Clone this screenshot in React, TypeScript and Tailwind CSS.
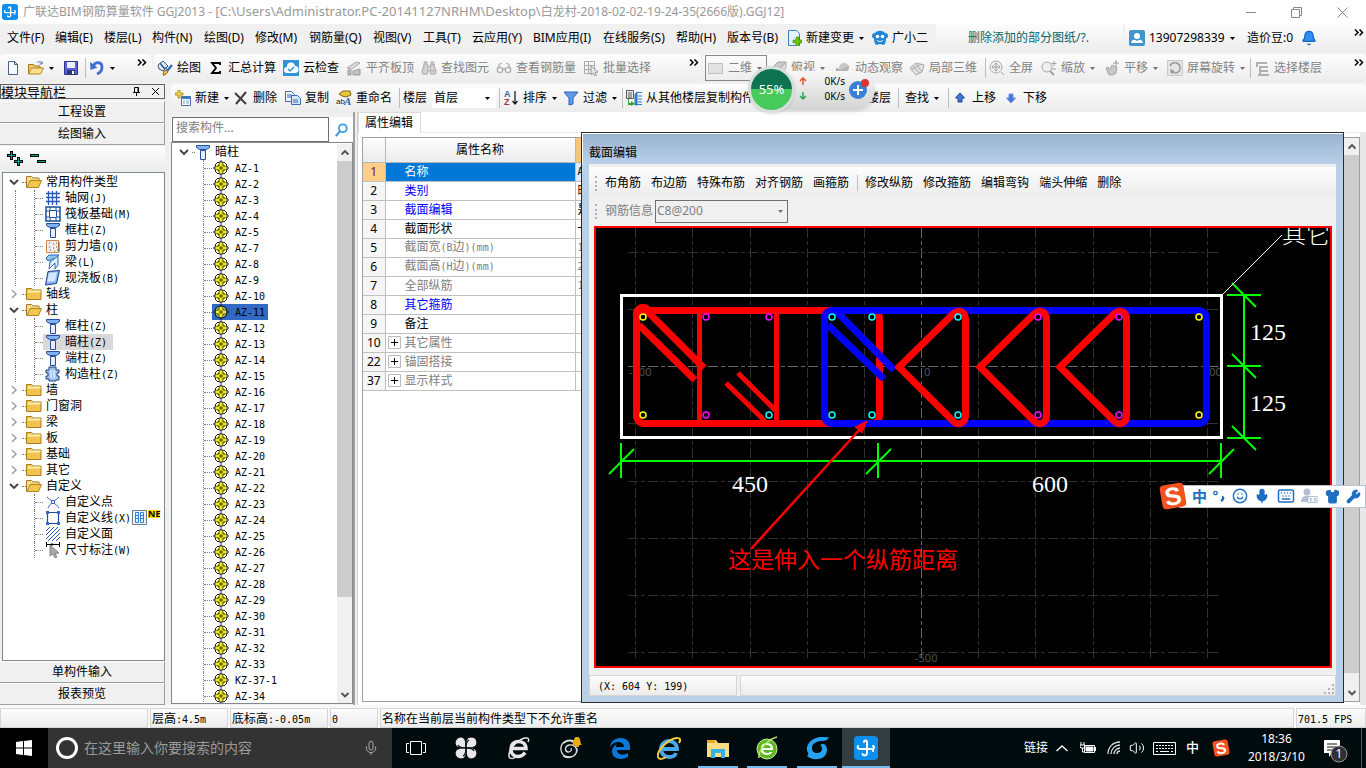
import type { ReactNode } from 'react'
import { Bell, Mic, Keyboard, Shirt, Wrench, Smile, Binoculars, Glasses, Volume2 } from 'lucide-react'
import clsx from 'clsx'

const UI = "font-['Noto_Sans','Noto_Sans_CJK_SC',sans-serif]"
const BAR = 'bg-gradient-to-b from-[#fdfdfd] to-[#ececec]'

// Latin runs sit on a half-width grid next to full-width characters
function Song({ text }: { text: string }) {
  return (
    <>
      {text.split(/([\x20-\x7e]+)/).map((part, i) =>
        i % 2 ? (
          <span key={i} className="whitespace-pre font-['DejaVu_Sans_Mono',monospace] text-[10px]">
            {part}
          </span>
        ) : (
          part
        ),
      )}
    </>
  )
}

function Ico({ children, className }: { children: ReactNode; className?: string }) {
  return (
    <svg viewBox="0 0 16 16" className={clsx('shrink-0', className ?? 'h-4 w-4')} fill="none" aria-hidden="true">
      {children}
    </svg>
  )
}

function Caret({ gray }: { gray?: boolean }) {
  return (
    <svg viewBox="0 0 5 3" className="ml-px h-[3px] w-[5px] shrink-0" aria-hidden="true">
      <path d="M0 0h5L2.5 3z" fill={gray ? '#707070' : '#000'} />
    </svg>
  )
}

function More() {
  return (
    <button aria-label="更多" className="h-6 w-3 shrink-0 pb-3">
      <svg viewBox="0 0 10 7" className="h-[7px] w-[10px]" fill="none" stroke="#000" strokeWidth="1.5">
        <path d="M1 .5 4 3.5 1 6.5M5.500 .5l3 3-3 3" />
      </svg>
    </button>
  )
}

function Sep() {
  return <span className="mx-[3px] h-5 w-px shrink-0 bg-[#bdbdbd]" />
}

type ToolProps = { icon?: ReactNode; label: string; w?: string; off?: boolean; caret?: boolean; hideLabel?: boolean }

function Tool({ icon, label, w, off, caret, hideLabel }: ToolProps) {
  return (
    <button
      aria-label={label}
      className={clsx('flex h-6 shrink-0 items-center gap-1 whitespace-nowrap text-xs', w, off ? 'text-[#838383]' : 'text-black')}
    >
      {icon}
      {!hideLabel && <span>{label}</span>}
      {caret && <Caret gray={off} />}
    </button>
  )
}

function AppLogo({ className }: { className: string }) {
  return (
    <svg viewBox="0 0 24 24" className={className} fill="none" aria-hidden="true">
      <rect width="24" height="24" rx="4" fill="#0d8ff0" />
      <path
        d="M10 6c0-2 3-2 3 0v11c0 3-4 3-4.500 1M4 10c-1 2 0 3 2 3h12c2 0 3-2 1-3M19 13v2"
        stroke="#fff"
        strokeWidth="2"
        strokeLinecap="round"
      />
    </svg>
  )
}

function SogouLogo({ className }: { className: string }) {
  return (
    <svg viewBox="0 0 28 28" className={className} aria-hidden="true">
      <g transform="rotate(-10 14 14)">
        <rect x="2" y="2" width="24" height="24" rx="4" fill="#f4511e" />
        <text x="14" y="23" textAnchor="middle" fontFamily="Liberation Sans, sans-serif" fontWeight="bold" fontSize="25" fill="#fff">S</text>
      </g>
    </svg>
  )
}

/* ---------- toolbar icons ---------- */

const newDoc = (
  <Ico>
    <path d="M3.500 1.500h6l3 3v10h-9z" fill="#f7fbff" stroke="#4a5f88" />
    <path d="M9.500 1.500v3h3" stroke="#4a5f88" />
  </Ico>
)
const openFolder = (
  <Ico>
    <path d="M.5 14V4.500h5l1.500 1.500h5v3" fill="#f2c860" stroke="#a07820" />
    <path d="m.5 14 3-6h12l-3 6z" fill="#ffe08a" stroke="#b08628" />
    <path d="M9 3c1.500-2 4-2 5 1m0 0V1.500M14 4h-2.500" stroke="#4e6fa5" />
  </Ico>
)
const save = (
  <Ico>
    <path d="M1.500 1.500h13v13h-13z" fill="#5a62d8" stroke="#2c3090" />
    <path d="M4 2h8v6H4z" fill="#e8f0ff" />
    <path d="M4 10h8v4.500H4z" fill="#303878" />
    <path d="M9 11h2v3H9z" fill="#fff" />
  </Ico>
)
const undo = (
  <Ico>
    <path d="M4 6c3-5 9-4 9 1 0 3-2 6-5 7" stroke="#3f6fd0" strokeWidth="2.800" />
    <path d="m1 2 .5 8 7-2.500z" fill="#3f6fd0" />
  </Ico>
)
const brush = (
  <Ico>
    <path d="m1 5 5-4 5 5-5 5-4-2z" fill="#dce8f8" stroke="#47566e" />
    <path d="m3 3 4 5c1 1 3 0 2-1" stroke="#2f5b9c" strokeWidth="1.500" />
    <path d="m6 15 1-4 3-1 1 2-3 3z" fill="#f0c040" stroke="#8c6a14" />
    <path d="m10 11 5-6" stroke="#3b6cb5" strokeWidth="2.500" />
  </Ico>
)
const sigma = (
  <Ico>
    <path d="M12 5V3H4l4 5-4 5h8v-2" stroke="#000" strokeWidth="1.800" />
  </Ico>
)
const cloud = (
  <Ico>
    <rect width="16" height="16" fill="#2f93d8" />
    <path d="M4 13a3 3 0 0 1 0-6 4 4 0 0 1 8-1 3 3 0 0 1 0 7z" fill="#fff" />
    <path d="m5 9 2 2 4-4" stroke="#2f93d8" strokeWidth="1.500" />
  </Ico>
)
const plateTop = (
  <Ico>
    <path d="m1 8 9-6 4 1-8 6z" fill="#d9d9d9" stroke="#aaa" />
    <path d="M2 15h3v-5H2zm5 0h7V9l-7 2z" fill="#c2c2c2" stroke="#999" />
  </Ico>
)
const batch = (
  <Ico>
    <path d="M1.500 1.500h10v12h-10zM1.500 5.500h10M1.500 9.500h10M5.500 1.500v12" stroke="#aaa" />
    <path d="m8 6 7 6-3 .5 1.500 3-2 .5-1.500-3L8 15z" fill="#e8e8e8" stroke="#999" />
  </Ico>
)
const box2d = (
  <Ico>
    <path d="M.5 3.500h14v10H.5z" fill="#e2e2e2" stroke="#c0c0c0" />
  </Ico>
)
const topView = (
  <Ico>
    <path d="m1 8 6-6h8l-5 6z" fill="#c9c9c9" stroke="#a0a0a0" />
    <path d="M1 8h9v6H1zM10 8l5-6v6l-5 6z" fill="#e0e0e0" stroke="#b0b0b0" />
  </Ico>
)
const orbit = (
  <Ico>
    <circle cx="9" cy="8" r="5" fill="#c6c6c6" />
    <path d="M1 12c1 4 10 2 13-6M1 12l1-4 3 3z" stroke="#a5a5a5" fill="#b5b5b5" />
  </Ico>
)
const part3d = (
  <Ico>
    <path d="m1 8 6-5 8 2-2 7-6 3z" fill="#e2e2e2" stroke="#aaa" />
    <path d="m4 6 7 8M7 4l6 8M2 10l10-6" stroke="#aaa" />
  </Ico>
)
const fullScreen = (
  <Ico>
    <circle cx="7" cy="7" r="6" fill="#efefef" stroke="#aaa" />
    <path d="M7 3v8M3 7h8M5.500 4.500 7 3l1.500 1.500M5.500 9.500 7 11l1.500-1.500M4.500 5.500 3 7l1.500 1.500M9.500 5.500 11 7 9.500 8.500M12 12l3 3" stroke="#a0a0a0" />
  </Ico>
)
const zoomIcon = (
  <Ico>
    <circle cx="6" cy="7" r="5" fill="#efefef" stroke="#aaa" />
    <path d="m9 11 4 4" stroke="#a0a0a0" strokeWidth="2" />
    <path d="M13 1v5M10.500 3.500h5M11 9h4" stroke="#a0a0a0" />
  </Ico>
)
const pan = (
  <Ico>
    <path d="M2 8 4 7l2 2 2-4 2 1 3 1-1 6-3 2H5z" fill="#c6c6c6" stroke="#a8a8a8" />
    <path d="M12 0v6M9 3h6" stroke="#999" />
  </Ico>
)
const rotate = (
  <Ico>
    <path d="M.5.5h15v15H.5z" fill="#e6e6e6" stroke="#c8c8c8" />
    <path d="M3 6c2-5 11-4 10 3-1 4-5 5-8 3" stroke="#999" strokeWidth="1.500" />
    <path d="m3 9 1 5 4-3z" fill="#999" />
  </Ico>
)
const floors = (
  <Ico>
    <path d="M2 3h11M5 7h9M5 11h9M4 15h11M3 3v4M6 7v8" stroke="#b0b0b0" strokeWidth="2" />
  </Ico>
)
const create = (
  <Ico>
    <path d="M6.500 6.500h9v9h-9z" fill="#fff" stroke="#4a6fa8" />
    <path d="M7 7h8v2H7z" fill="#3b77c8" />
    <path d="M8 11h2m1 0h3m-6 2h2m1 0h3" stroke="#7b9cc8" />
    <path d="M3 0h2v3h3v2H5v3H3V5H0V3h3z" fill="#ffe24a" stroke="#a08000" strokeWidth=".8" />
  </Ico>
)
const cross = (
  <Ico>
    <path d="m2 3 11 11M13 2 3 14" stroke="#404040" strokeWidth="2" />
  </Ico>
)
const copy = (
  <Ico>
    <path d="M.5 1.500h6l3 3v7h-9z" fill="#eaf2ff" stroke="#3f6cb0" />
    <path d="M6.500 5.500h6l3 3v6h-9z" fill="#d5e5ff" stroke="#3f6cb0" />
    <path d="M2 5h5M2 7h4m2 3h5m-5 2h5" stroke="#3f6cb0" />
  </Ico>
)
const rename = (
  <Ico>
    <path d="m3 4 4-3h7l1 4-5 2-4-1z" fill="#e8c53c" stroke="#7c6414" />
    <text x="0" y="14" fontSize="8" fontFamily="Liberation Sans, sans-serif" fill="#222">ab</text>
    <text x="8" y="15" fontSize="11" fontWeight="bold" fontStyle="italic" fontFamily="Liberation Serif, serif" fill="#2b5fb8">A</text>
  </Ico>
)
const sort = (
  <Ico>
    <text x="1" y="7" fontSize="9" fontWeight="bold" fontFamily="Liberation Sans, sans-serif" fill="#3c63a8">A</text>
    <text x="1" y="15" fontSize="9" fontWeight="bold" fontFamily="Liberation Sans, sans-serif" fill="#9b3535">Z</text>
    <path d="M12 1v13m-2.500-3 2.500 3 2.500-3" stroke="#111" strokeWidth="1.200" />
  </Ico>
)
const filter = (
  <Ico>
    <path d="M1 2h14l-5 6v6l-4 1V8z" fill="#5f9be8" stroke="#2f62b5" />
  </Ico>
)
const copyFrom = (
  <Ico>
    <path d="M.5.5h7v8h-7z" fill="#eee" stroke="#555" />
    <path d="M2 3h4M2 5h4M2 7h4" stroke="#555" />
    <path d="M9 4.500 11 2v13H9zM11 2.500h5M12 6h4M12 9h4M12 12h4M11 14.500h5" fill="#2f7bd0" stroke="#2f7bd0" />
    <path d="M3 9v4h2v-2l4 3-4 2v-1H2V9z" fill="#35a035" />
  </Ico>
)
const blueUp = (
  <Ico>
    <path d="m8 3 4.500 5H10v4H6V8H3.500z" fill="#4478dc" stroke="#1c4293" />
  </Ico>
)
const blueDown = (
  <Ico>
    <path d="m8 13 4.500-5H10V4H6v4H3.500z" fill="#4478dc" stroke="#6a8fdc" />
  </Ico>
)

/* ---------- tree icons ---------- */

const folder = (
  <Ico>
    <path d="M.5 13.500v-11h5l1.500 1.500h8v9.500z" fill="#f2c14e" stroke="#a87c1c" />
    <path d="M1.500 5.500h13" stroke="#ffeeb0" strokeWidth="2" />
  </Ico>
)
const folderOpen = (
  <Ico>
    <path d="M.5 13.500v-11h5l1.500 1.500h6v3" fill="#f5dc90" stroke="#a87c1c" />
    <path d="m1 13.500 3-7h11.500l-3 7z" fill="#f6c54c" stroke="#b28524" />
  </Ico>
)
const column = (
  <Ico>
    <path d="M1.500 1.500h13v2l-3 2h-7l-3-2z" fill="#7fb2ee" stroke="#234f9c" />
    <path d="M5.500 6.500h5v9h-5z" fill="#e3efff" stroke="#234f9c" />
  </Ico>
)
const axisGrid = (
  <Ico>
    <path d="M3.500 1v14M7.500 1v14M11.500 1v14M1 3.500h14M1 7.500h14M1 11.500h14" stroke="#2b57b8" strokeWidth="1.300" />
  </Ico>
)
const raft = (
  <Ico>
    <path d="M1 1h14v14H1z" stroke="#1d4e95" strokeWidth="1.500" />
    <path d="M4.500 4.500h7v7h-7zM1 5h3m8 0h3M1 11h3m8 0h3M5 1v3m6-3v3M5 12v3m6-3v3" stroke="#1d4e95" />
  </Ico>
)
const shearWall = (
  <Ico>
    <path d="M1.500 2.500h12v12h-12z" fill="#eee" stroke="#d08850" />
    <path d="M4 5h1m3 1h1m2-1h1M4 9h1m3 1h1m2-1h1M5 12h1m3 1h1M12 12h1M14 4v10" stroke="#7a4a30" />
  </Ico>
)
const beam = (
  <Ico>
    <path d="m1 4 3-3h10l-4 4H6L5 7 2 6z" fill="#8fc5f2" stroke="#2d6bb5" />
    <path d="m4 15 1-7 8-6v9l-3 4V9z" fill="#dcefff" stroke="#2d6bb5" />
  </Ico>
)
const slab = (
  <Ico>
    <path d="m3 1.500 11.500-1-3 13-11 1.500z" fill="#86b4f0" stroke="#1b3f86" />
    <path d="m4 3 8-1-2 9-8 1z" fill="#d6e7ff" />
  </Ico>
)
const tieColumn = (
  <Ico>
    <path d="M4 1h7v3h3v3h-2v3h2v4h-3v1H4v-2H1v-3h2V7H1V4h3z" fill="#9cc3f2" stroke="#1f3f7d" />
    <path d="M6 4v8m3-8v8" stroke="#fff" />
  </Ico>
)
const customPoint = (
  <Ico>
    <path d="M2 3c2 2 3 3 4 3m8-3c-2 2-3 3-4 3M3 14c1-2 2-4 3-4m8 4c-2-2-3-4-4-4" stroke="#2b57b8" />
    <path d="M6.500 6.500h3v3h-3z" fill="#fff" stroke="#2b57b8" />
  </Ico>
)
const customLine = (
  <Ico>
    <path d="M2.500 2.500h11v11h-11z" stroke="#1d4e95" strokeWidth="1.200" />
    <path d="M1 1h3v3H1zm11 0h3v3h-3zM1 12h3v3H1zm11 0h3v3h-3z" fill="#2b6cc8" />
  </Ico>
)
const customFace = (
  <Ico>
    <path d="m1 5 4-4M1 9l8-8M1 13l12-12M3 15 15 3M7 15l8-8M11 15l4-4" stroke="#2b57b8" />
  </Ico>
)
const dimension = (
  <Ico>
    <path d="M1.500 0v5m13-5v5M2 2.500h12M7 1v3" stroke="#000" />
    <path d="m5 3 9 8-4 .5 2 3.500-2 1-2-4-3 2z" fill="#a8a8a8" stroke="#888" />
  </Ico>
)
const gear = (
  <Ico>
    <path d="M6 3h4l3 3v4l-3 3H6l-3-3V6z" fill="#f2ea20" />
    <path
      d="M6 3h1V1h2v2h1M10 3l1-1 1 1 1 1 1 1-1 1M13 6v1h2v2h-2v1M13 10l1 1-1 1-1 1-1 1-1-1M10 13H9v2H7v-2H6M6 13l-1 1-1-1-1-1-1-1 1-1M3 10V9H1V7h2V6M3 6 2 5l1-1 1-1 1-1 1 1"
      stroke="#222"
    />
    <path d="M7 7h2v2H7zM6 4v2M10 4v2M6 10v2M10 10v2M4 6h2M4 10h2M10 6h2M10 10h2" stroke="#3a3800" />
  </Ico>
)

type Node = { label: string; icon: ReactNode; active?: boolean; badge?: boolean }
type Root = { label: string; children?: Node[] }

const modules: Root[] = [
  {
    label: '常用构件类型',
    children: [
      { label: '轴网(J)', icon: axisGrid },
      { label: '筏板基础(M)', icon: raft },
      { label: '框柱(Z)', icon: column },
      { label: '剪力墙(Q)', icon: shearWall },
      { label: '梁(L)', icon: beam },
      { label: '现浇板(B)', icon: slab },
    ],
  },
  { label: '轴线' },
  {
    label: '柱',
    children: [
      { label: '框柱(Z)', icon: column },
      { label: '暗柱(Z)', icon: column, active: true },
      { label: '端柱(Z)', icon: column },
      { label: '构造柱(Z)', icon: tieColumn },
    ],
  },
  { label: '墙' },
  { label: '门窗洞' },
  { label: '梁' },
  { label: '板' },
  { label: '基础' },
  { label: '其它' },
  {
    label: '自定义',
    children: [
      { label: '自定义点', icon: customPoint },
      { label: '自定义线(X)', icon: customLine, badge: true },
      { label: '自定义面', icon: customFace },
      { label: '尺寸标注(W)', icon: dimension },
    ],
  },
]

const members = [
  ...[1, 2, 3, 4, 5, 7, 8, 9, 10, 11, 12, 13, 14, 15, 16, 17, 18, 19, 20, 21, 22, 23, 24, 25, 26, 27, 28, 29, 30, 31, 32, 33].map((n) => `AZ-${n}`),
  'KZ-37-1',
  'AZ-34',
]

const properties = [
  { no: 1, name: '名称', value: 'AZ-11', color: 'text-white' },
  { no: 2, name: '类别', value: '暗柱', color: 'text-[#0000ff]' },
  { no: 3, name: '截面编辑', value: '是', color: 'text-[#0000ff]' },
  { no: 4, name: '截面形状', value: '一字形', color: 'text-black' },
  { no: 5, name: '截面宽(B边)(mm)', value: '1050', color: 'text-[#808080]' },
  { no: 6, name: '截面高(H边)(mm)', value: '250', color: 'text-[#808080]' },
  { no: 7, name: '全部纵筋', value: '16', color: 'text-[#808080]' },
  { no: 8, name: '其它箍筋', value: '', color: 'text-[#0000ff]' },
  { no: 9, name: '备注', value: '', color: 'text-black' },
  { no: 10, name: '其它属性', value: '', color: 'text-[#808080]', group: true },
  { no: 22, name: '锚固搭接', value: '', color: 'text-[#808080]', group: true },
  { no: 37, name: '显示样式', value: '', color: 'text-[#808080]', group: true },
]

const menus = [
  { label: '文件(F)', w: 'w-12' },
  { label: '编辑(E)', w: 'w-[49px]' },
  { label: '楼层(L)', w: 'w-12' },
  { label: '构件(N)', w: 'w-[52px]' },
  { label: '绘图(D)', w: 'w-[51px]' },
  { label: '修改(M)', w: 'w-[54px]' },
  { label: '钢筋量(Q)', w: 'w-16' },
  { label: '视图(V)', w: 'w-[50px]' },
  { label: '工具(T)', w: 'w-[49px]' },
  { label: '云应用(Y)', w: 'w-[61px]' },
  { label: 'BIM应用(I)', w: 'w-[70px]' },
  { label: '在线服务(S)', w: 'w-[73px]' },
  { label: '帮助(H)', w: 'w-[51px]' },
  { label: '版本号(B)', w: 'w-[59px]' },
]

function TitleBar() {
  return (
    <header className="flex h-6 shrink-0 items-center bg-white pl-[2px] text-[13px] text-[#999]">
      <AppLogo className="h-4 w-4 shrink-0" />
      <h1 className="ml-[5px] flex-1 truncate pb-px">
        <span className="text-xs">广联达BIM钢筋算量软件 GGJ2013 - </span>
        [C:\Users\Administrator.PC-20141127NRHM\Desktop\
        <span className="text-xs">白龙村-2018-02-02-19-24-35(2666版).GGJ12]</span>
      </h1>
      <button aria-label="最小化" className="flex h-5 w-[46px] items-center justify-center">
        <span className="h-px w-[10px] bg-[#888]" />
      </button>
      <button aria-label="还原" className="flex h-5 w-[45px] items-center justify-center">
        <svg viewBox="0 0 11 11" className="h-[11px] w-[11px]" fill="none" stroke="#888">
          <path d="M.5 2.500h8v8h-8zM2.500 2.500v-2h8v8h-2" />
        </svg>
      </button>
      <button aria-label="关闭" className="flex h-5 w-[47px] items-center justify-center">
        <svg viewBox="0 0 11 11" className="h-[11px] w-[11px]" fill="none" stroke="#888">
          <path d="m.5.5 10 10M10.500.5l-10 10" />
        </svg>
      </button>
    </header>
  )
}

function MenuBar() {
  return (
    <nav className="flex h-7 shrink-0 items-center whitespace-nowrap pl-[7px] text-xs">
      {menus.map((m) => (
        <button key={m.label} className={clsx('shrink-0 text-left', m.w)}>
          {m.label}
        </button>
      ))}
      <Tool
        label="新建变更"
        w="w-[86px]"
        caret
        icon={
          <Ico>
            <path d="M2.500.5h8l3 3v12h-11z" fill="#e5f3fc" stroke="#3d82b8" />
            <path d="M10 7h3v3h3v3h-3v3h-3v-3H7v-3h3z" fill="#6cc318" stroke="#438808" strokeWidth=".6" />
          </Ico>
        }
      />
      <Tool
        label="广小二"
        w="w-[62px]"
        icon={
          <Ico>
            <path d="M0 6c0-2 1-3 3-3 2-3 8-3 10 0 2 0 3 1 3 3s-1 2-2 2c0 4-1 7-3 7-1 0-1-1-3-1s-2 1-3 1c-2 0-3-3-3-7-1 0-2 0-2-2z" fill="#1f86d8" />
            <circle cx="5.500" cy="6.500" r="1.800" fill="#fff" />
            <circle cx="10.500" cy="6.500" r="1.800" fill="#fff" />
            <path d="M5 10c1 2 5 2 6 0" stroke="#fff" />
          </Ico>
        }
      />
      <a href="#notice" className={clsx('ml-[2px] flex h-7 w-[187px] shrink-0 items-center pl-8 text-[#00676b]', BAR)}>
        删除添加的部分图纸/?.
      </a>
      <div className={clsx('ml-[2px] flex h-7 flex-1 items-center pl-1', BAR)}>
        <Tool
          label="13907298339"
          w="w-[118px]"
          caret
          icon={
            <Ico>
              <rect width="16" height="16" rx="2" fill="#3f95cc" />
              <circle cx="8" cy="6" r="3" fill="#fff" />
              <path d="M2 13c1-4 3-4 6-2 3-2 5-2 6 2z" fill="#fff" />
            </Ico>
          }
        />
        <Tool label="造价豆:0" w="w-[54px]" />
        <Bell className="h-4 w-4 text-[#1565c0]" fill="#2f8cf0" />
        <span className="flex-1" />
        <More />
      </div>
    </nav>
  )
}

function MainToolbar() {
  return (
    <div className="flex h-8 shrink-0 gap-[2px] py-[2px]">
      <div className={clsx('flex w-[152px] shrink-0 items-center rounded-sm pl-[5px]', BAR)}>
        <Tool label="新建" hideLabel w="w-[23px]" icon={newDoc} />
        <Tool label="打开" hideLabel caret w="w-[35px]" icon={openFolder} />
        <Tool label="保存" hideLabel w="w-[19px]" icon={save} />
        <Sep />
        <Tool label="撤销" hideLabel caret w="w-12" icon={undo} />
        <More />
      </div>
      <div className={clsx('flex w-[547px] shrink-0 items-center rounded-sm pl-[3px]', BAR)}>
        <Tool label="绘图" w="w-[51px]" icon={brush} />
        <Tool label="汇总计算" w="w-[75px]" icon={sigma} />
        <Tool label="云检查" w="w-[63px]" icon={cloud} />
        <Tool label="平齐板顶" w="w-[75px]" off icon={plateTop} />
        <Tool label="查找图元" w="w-[75px]" off icon={<Binoculars className="h-4 w-4 text-[#b5b5b5]" fill="#d5d5d5" />} />
        <Tool label="查看钢筋量" w="w-[87px]" off icon={<Glasses className="h-4 w-4 text-[#b0b0b0]" />} />
        <Tool label="批量选择" w="w-[75px]" off icon={batch} />
        <span className="flex-1" />
        <More />
      </div>
      <div className={clsx('flex flex-1 items-center rounded-sm pl-[2px]', BAR)}>
        <span className="mr-1 flex w-[62px] shrink-0 border border-[#888] pl-[2px]">
          <Tool label="二维" off caret icon={box2d} />
        </span>
        <Tool label="俯视" w="w-16" off caret icon={topView} />
        <Tool label="动态观察" w="w-[74px]" off icon={orbit} />
        <Tool label="局部三维" w="w-[73px]" off icon={part3d} />
        <Sep />
        <Tool label="全屏" w="w-[52px]" off icon={fullScreen} />
        <Tool label="缩放" w="w-[63px]" off caret icon={zoomIcon} />
        <Tool label="平移" w="w-[63px]" off caret icon={pan} />
        <Tool label="屏幕旋转" w="w-20" off caret icon={rotate} />
        <Sep />
        <Tool label="选择楼层" w="w-[90px]" off icon={floors} />
        <span className="flex-1" />
        <More />
      </div>
    </div>
  )
}

function MemberToolbar() {
  return (
    <div className={clsx('flex h-7 shrink-0 items-center rounded-sm pl-1', BAR)}>
      <Tool label="新建" w="w-[58px]" caret icon={create} />
      <Tool label="删除" w="w-[52px]" icon={cross} />
      <Tool label="复制" w="w-[51px]" icon={copy} />
      <Tool label="重命名" w="w-[60px]" icon={rename} />
      <Sep />
      <label htmlFor="floor" className="w-[29px] shrink-0 text-xs">楼层</label>
      <span className="flex h-5 w-16 shrink-0 items-center bg-white pr-[6px]">
        <select id="floor" className="w-full appearance-none bg-white pl-[2px] text-xs outline-none">
          <option>首层</option>
        </select>
        <Caret />
      </span>
      <Sep />
      <Tool label="排序" w="w-[60px]" caret icon={sort} />
      <Tool label="过滤" w="w-14" caret icon={filter} />
      <Sep />
      <Tool label="从其他楼层复制构件" w="w-[137px]" icon={copyFrom} />
      <Tool label="复制构件到其他楼层" w="w-[132px]" icon={copyFrom} />
      <Sep />
      <span className="ml-[3px] flex">
        <Tool label="查找" w="w-10" caret />
      </span>
      <Sep />
      <Tool label="上移" w="w-[51px]" icon={blueUp} />
      <Tool label="下移" w="w-[51px]" icon={blueDown} />
    </div>
  )
}

function Chevron({ open }: { open: boolean }) {
  return (
    <Ico>
      {open ? <path d="m4 6 4 4 4-4" stroke="#404040" strokeWidth="1.800" /> : <path d="m6 4 4 4-4 4" stroke="#a0a0a0" strokeWidth="1.500" />}
    </Ico>
  )
}

function NavButton({ label }: { label: string }) {
  return (
    <button className="h-[22px] shrink-0 border-b border-r border-[#a0a0a0] border-t border-t-white bg-[#f0f0f0] text-center text-xs leading-5">
      {label}
    </button>
  )
}

function ModulePanel() {
  return (
    <aside className="flex w-[165px] shrink-0 flex-col">
      <div className="flex h-[15px] shrink-0 items-center border border-[#606060]">
        <h2 className="flex-1 text-[13px] leading-3">模块导航栏</h2>
        <button aria-label="固定" className="mr-[10px]">
          <svg viewBox="0 0 9 11" className="h-[11px] w-[9px]" fill="none" stroke="#000">
            <path d="M2.500 6V1.500h4V6M6 1.500V6M1 6.500h7M4.500 7v3" />
          </svg>
        </button>
        <button aria-label="关闭" className="mr-1">
          <svg viewBox="0 0 9 9" className="h-[9px] w-[9px]" fill="none" stroke="#000">
            <path d="m1 1 7 7M8 1 1 8" />
          </svg>
        </button>
      </div>
      <div className="mt-[2px] flex flex-col">
        <NavButton label="工程设置" />
        <NavButton label="绘图输入" />
      </div>
      <div className={clsx('mt-px flex h-[26px] shrink-0 items-center gap-[7px] pl-[7px]', BAR)}>
        <button aria-label="全部展开">
          <Ico>
            <path d="M4.500 0v9M0 4.500h9M11.500 6v9M7 10.500h9" stroke="#000" strokeWidth="3" />
            <path d="M4.500 1v7M1 4.500h7M11.500 7v7M8 10.500h7" stroke="#00a090" />
          </Ico>
        </button>
        <button aria-label="全部折叠">
          <Ico>
            <path d="M0 4.500h9M7 10.500h9" stroke="#000" strokeWidth="3" />
            <path d="M1 4.500h7M8 10.500h7" stroke="#00a090" />
          </Ico>
        </button>
      </div>
      <ul className="ml-[2px] min-h-0 flex-1 overflow-hidden border border-[#828790] bg-white pt-px text-xs leading-4">
        {modules.map((root, i) => (
          <li key={root.label}>
            <div className="flex h-4 items-center pl-[3px]">
              <Chevron open={!!root.children} />
              <span className="w-1 border-t border-dotted border-[#808080]" />
              {root.children ? folderOpen : folder}
              <span className="ml-1">{root.label}</span>
            </div>
            {root.children && (
              <ul>
                {root.children.map((n) => (
                  <li key={n.label} className="flex h-4 items-center">
                    <span className={clsx('ml-3 h-4 w-[18px] shrink-0', i < modules.length - 1 && 'border-l border-dotted border-[#808080]')} />
                    <span className="ml-px h-4 w-px shrink-0 border-l border-dotted border-[#808080]" />
                    <span className="w-2 shrink-0 border-t border-dotted border-[#808080]" />
                    <span className={clsx('flex h-4 items-center whitespace-nowrap px-[2px]', n.active && 'bg-[#d9d9d9]')}>
                      {n.icon}
                      <span className="ml-1 pr-1">
                        <Song text={n.label} />
                      </span>
                    </span>
                    {n.badge && (
                      <span className="-ml-[5px] flex shrink-0 items-start">
                        <Ico>
                          <path d="M.5.5h14v14H.5z" fill="#e8f4ff" stroke="#6a7a90" />
                          <path d="M3.500 2.500h3v10h-3zm5 0h3v10h-3zM4 5.500h2m3 0h2M4 8.500h2m3 0h2" stroke="#2b80d8" />
                        </Ico>
                        <span className="h-2 bg-[#ffd800] text-[9px] font-bold leading-2">NE</span>
                      </span>
                    )}
                  </li>
                ))}
              </ul>
            )}
          </li>
        ))}
      </ul>
      <NavButton label="单构件输入" />
      <NavButton label="报表预览" />
    </aside>
  )
}

function ScrollBar({ thumb }: { thumb: string }) {
  return (
    <div className="flex w-[15px] shrink-0 flex-col items-center bg-[#f0f0f0]" aria-hidden="true">
      <svg viewBox="0 0 16 16" className="h-[17px] w-4" fill="none" stroke="#505050" strokeWidth="1.800">
        <path d="m4.500 10 3.500-3.500L11.500 10" />
      </svg>
      <div className="w-full flex-1">
        <div className={clsx('w-full bg-[#cdcdcd]', thumb)} />
      </div>
      <svg viewBox="0 0 16 16" className="h-[17px] w-4" fill="none" stroke="#505050" strokeWidth="1.800">
        <path d="M4.500 6.500 8 10l3.500-3.500" />
      </svg>
    </div>
  )
}

function MemberPanel() {
  return (
    <section className="flex w-[184px] shrink-0 flex-col border-r-2 border-[#a0a0a0] pb-px pt-[5px]">
      <div className="flex h-[25px] shrink-0 bg-white">
        <input
          aria-label="搜索构件"
          placeholder="搜索构件..."
          className="ml-px w-[157px] border border-[#707070] pl-[3px] pb-1 text-xs placeholder-[#808080] outline-none"
        />
        <button aria-label="搜索" className="ml-[6px]">
          <Ico className="h-[14px] w-[14px]">
            <circle cx="9" cy="6" r="4.500" stroke="#3c9be0" strokeWidth="2" />
            <path d="m6 9-5 6" stroke="#3c9be0" strokeWidth="2.500" />
          </Ico>
        </button>
      </div>
      <div className="flex min-h-0 flex-1 border border-[#828790] bg-white pt-px">
        <ul className="min-w-0 flex-1 overflow-hidden text-xs leading-4">
          <li className="flex h-4 items-center pl-1">
            <Chevron open />
            <span className="w-[3px] border-t border-dotted border-[#808080]" />
            {column}
            <span className="ml-1">暗柱</span>
          </li>
          {members.map((m) => (
            <li key={m} className="flex h-4 items-center pl-[31px]">
              <span className="h-4 w-px border-l border-dotted border-[#808080]" />
              <span className="w-2 border-t border-dotted border-[#808080]" />
              <span className={clsx('flex h-4 items-center px-px', m === 'AZ-11' && 'bg-[#316ac5]')}>
                {gear}
                <span className="ml-1 whitespace-nowrap px-[2px]">
                  <Song text={m} />
                </span>
              </span>
            </li>
          ))}
        </ul>
        <ScrollBar thumb="h-[83%]" />
      </div>
    </section>
  )
}

const gridX = [635, 692, 750, 807, 864, 921, 978, 1035, 1093, 1150, 1207]
const gridY = [252, 309, 366, 423, 481, 538, 595, 652]
const bars = [
  { x: 643, top: '#ff0', bottom: '#ff0' },
  { x: 706, top: '#f0f', bottom: '#f0f' },
  { x: 769, top: '#f0f', bottom: '#0ff' },
  { x: 832, top: '#0ff', bottom: '#0ff' },
  { x: 872, top: '#0ff', bottom: '#0ff' },
  { x: 958, top: '#0ff', bottom: '#0ff' },
  { x: 1038, top: '#f0f', bottom: '#f0f' },
  { x: 1119, top: '#f0f', bottom: '#f0f' },
  { x: 1199, top: '#ff0', bottom: '#ff0' },
]

function SectionDrawing() {
  return (
    <svg viewBox="596 228 734 438" className="h-full w-full bg-black" fill="none" role="img" aria-label="截面配筋图">
      <g strokeDasharray="10 3 4 3" shapeRendering="crispEdges">
        {gridX.map((x) => (
          <path key={x} d={`M${x + 0.5} 228V661`} stroke={x === 921 ? '#666' : '#303030'} />
        ))}
        {gridY.map((y) => (
          <path key={y} d={`M628 ${y + 0.5}H1218`} stroke={y === 366 ? '#666' : '#303030'} />
        ))}
      </g>
      <g fill="#505050" fontFamily="Noto Sans, sans-serif" fontSize="11">
        <text x="629" y="376">-500</text>
        <text x="924" y="376">0</text>
        <text x="1203" y="376">500</text>
        <text x="915" y="662">-500</text>
      </g>

      <path d="M621.500 295.500h600v142h-600z" stroke="#fff" strokeWidth="3" />

      <g stroke="#f00" strokeWidth="7">
        <rect x="636.500" y="310.500" width="243" height="113" rx="8" />
        <path d="m647 311 57 57M639 325l56 55" />
      </g>
      <path d="M636 317a7 7 0 0 1 14-6" stroke="#f00" strokeWidth="5" />
      <g stroke="#f00" strokeWidth="5">
        <path d="M699.500 311v112M776.500 311v112M738 373l38 38M726 383l39 38" />
      </g>

      <g stroke="#00f" strokeWidth="7">
        <rect x="824.500" y="310.500" width="382" height="113" rx="8" />
        <path d="m837 312 57 58M828 325l56 54" />
      </g>
      <g stroke="#f00" strokeWidth="7">
        {[0, 81, 161].map((dx) => (
          <path key={dx} transform={`translate(${dx} 0)`} d="m897 369 56-55c5-5 12-3 12.500 5v97c-.5 8-8 10-12.500 5l-56-56" />
        ))}
      </g>

      {bars.map((b) => (
        <g key={b.x} strokeWidth="1.500">
          <circle cx={b.x} cy="317" r="3" stroke={b.top} fill="#000" />
          <circle cx={b.x} cy="415" r="3" stroke={b.bottom} fill="#000" />
        </g>
      ))}

      <g stroke="#0f0" strokeWidth="2">
        <path d="M621 461h600M621 443v35M878 443v35M1221 443v35" />
        <path d="m609 474 25-25M866 474l25-25M1209 474l25-25" />
        <path d="M1244 295v143M1227 295h34M1227 366h34M1227 438h34" />
        <path d="m1232 283 24 24M1232 354l24 24M1232 426l24 24" />
      </g>
      <path d="m1223 294 59-59" stroke="#fff" />
      <g fill="#fff" fontFamily="Liberation Serif, serif" fontSize="24">
        <text x="732" y="492">450</text>
        <text x="1032" y="492">600</text>
        <text x="1250" y="340">125</text>
        <text x="1250" y="411">125</text>
        <text x="1282" y="243" fontFamily="Noto Sans CJK SC, sans-serif" fontWeight="300">其它</text>
      </g>

      <path d="M751 549 862 427" stroke="#f00" strokeWidth="2.500" />
      <path d="m867 421-5 12-7-6z" fill="#f00" stroke="#f00" />
      <text x="728" y="568" fill="#f00" fontFamily="Noto Sans CJK SC, sans-serif" fontSize="23">
        这是伸入一个纵筋距离
      </text>
    </svg>
  )
}

function Grip() {
  return <span className="mx-[6px] h-[15px] w-[2px] shrink-0 border-l-2 border-dotted border-[#b0b0b0]" />
}

function SectionEditor() {
  return (
    <section
      aria-label="截面编辑"
      className="absolute bottom-[2px] left-[223px] right-[22px] top-5 flex flex-col border border-[#2b2b2b] bg-[#b9d0e9] pb-[6px] pl-[7px] pr-[7px]"
    >
      <h2 className="-mx-[7px] flex h-[31px] shrink-0 items-center border-l border-t border-white bg-gradient-to-b from-[#99b4d1] to-[#b9d0e9] pl-[6px] pt-2 text-xs">
        截面编辑
      </h2>
      <div className="flex min-h-0 flex-1 flex-col bg-[#f0f0f0]">
        <div className={clsx('mt-[3px] flex h-[30px] shrink-0 items-center pt-[2px]', BAR)}>
          <Grip />
          <div className="ml-[2px] flex items-center gap-[10px] whitespace-nowrap text-xs">
            {['布角筋', '布边筋', '特殊布筋', '对齐钢筋', '画箍筋'].map((t) => (
              <button key={t}>{t}</button>
            ))}
          </div>
          <span className="ml-2 mr-[7px] h-4 w-px bg-[#c0c0c0]" />
          <div className="flex items-center gap-[10px] whitespace-nowrap text-xs">
            {['修改纵筋', '修改箍筋', '编辑弯钩', '端头伸缩', '删除'].map((t) => (
              <button key={t}>{t}</button>
            ))}
          </div>
        </div>
        <div className="flex h-7 shrink-0 items-center text-xs text-[#808080]">
          <Grip />
          <label htmlFor="rebar" className="ml-[2px]">钢筋信息</label>
          <span className="ml-[2px] flex h-[23px] w-[133px] items-center border border-[#707070] pr-1">
            <select id="rebar" className="w-full appearance-none bg-transparent pl-px outline-none">
              <option>C8@200</option>
            </select>
            <Caret gray />
          </span>
        </div>
        <div className="ml-[5px] mr-1 mt-px min-h-0 flex-1 border-2 border-[#ff0000] bg-black">
          <SectionDrawing />
        </div>
        <div className="mt-[7px] flex h-[21px] shrink-0 gap-[3px] text-xs">
          <div className={clsx('w-[148px] border border-[#d5d5d5] pl-2 leading-[19px]', BAR)}>
            <Song text="(X: 604 Y: 199)" />
          </div>
          <div className={clsx('flex flex-1 items-end justify-end border border-[#d5d5d5]', BAR)}>
            <svg viewBox="0 0 12 12" className="h-3 w-3" fill="#b5b5b5" aria-hidden="true">
              <path d="M9 1h2v2H9zM5 5h2v2H5zm4 0h2v2H9zM1 9h2v2H1zm4 0h2v2H5zm4 0h2v2H9z" />
            </svg>
          </div>
        </div>
      </div>
    </section>
  )
}

function PropertyPanel() {
  return (
    <section className="relative ml-[2px] flex min-w-0 flex-1 flex-col border-l border-[#d0d0d0] bg-white pt-5">
      <h2 className="absolute left-0 top-0 h-[21px] w-[63px] border border-b-0 border-[#d9d9d9] bg-white pl-[6px] text-xs leading-5">属性编辑</h2>
      <div className="flex min-h-0 flex-1 border-r-[6px] border-t border-[#e8e8e8] pt-1 pl-1">
        <div className="mb-[3px] flex min-w-0 flex-1 border border-[#a0a0a0]">
          <div className="min-w-0 flex-1">
            <table className="w-full table-fixed border-collapse text-xs">
              <thead>
                <tr className={clsx('h-6', BAR)}>
                  <th className="w-[22px] border-b border-r border-[#b8b8b8]" aria-label="序号" />
                  <th className="w-[190px] border-b border-r border-[#b8b8b8] text-center font-normal">属性名称</th>
                  <th className="border-b border-[#b8b8b8] bg-[#f5c878] font-normal">属性值</th>
                </tr>
              </thead>
              <tbody>
                {properties.map((p) => (
                  <tr key={p.no} className="h-[19px] leading-4">
                    <td
                      className={clsx(
                        'border-b border-r border-[#c0c0c0] p-0 text-center',
                        p.no === 1 ? 'bg-[#ffcf87] text-[#6a1050]' : 'bg-[#f6f6f6]',
                      )}
                    >
                      {p.no}
                    </td>
                    <td className={clsx('border-b border-r border-[#c0c0c0] p-0', p.color, p.no === 1 && 'bg-[#0078d7]')}>
                      <div className="flex items-center whitespace-nowrap pl-[2px]">
                        <span className="mr-1 w-[13px]">
                          {p.group && (
                            <button aria-label={`展开${p.name}`} className="block">
                              <svg viewBox="0 0 13 13" className="h-[13px] w-[13px]" fill="none">
                                <path d="M.5.5h12v12H.5z" stroke="#bbb" />
                                <path d="M3 6.500h7M6.500 3v7" stroke="#000" />
                              </svg>
                            </button>
                          )}
                        </span>
                        <span>
                          <Song text={p.name} />
                        </span>
                      </div>
                    </td>
                    <td className={clsx('border-b border-[#c0c0c0] p-0 pl-[2px]', p.no === 1 ? 'bg-[#dcebfa]' : p.no < 5 ? 'text-black' : p.color)}>
                      <Song text={p.value} />
                    </td>
                  </tr>
                ))}
              </tbody>
            </table>
          </div>
          <ScrollBar thumb="h-[98%]" />
        </div>
      </div>
      <SectionEditor />
    </section>
  )
}

function StatusBar() {
  const cell = clsx('h-5 shrink-0 overflow-hidden whitespace-nowrap border border-[#d5d5d5] pl-px leading-[19px]', BAR)
  return (
    <footer className="flex h-[23px] shrink-0 items-end gap-[2px] bg-[#f8f8f8] text-xs">
      <div className={clsx(cell, 'w-[148px]')} />
      <div className={clsx(cell, 'w-[78px]')}><Song text="层高:4.5m" /></div>
      <div className={clsx(cell, 'w-[98px]')}><Song text="底标高:-0.05m" /></div>
      <div className={clsx(cell, 'w-12')}><Song text="0" /></div>
      <div className={clsx(cell, 'flex-1')}>名称在当前层当前构件类型下不允许重名</div>
      <div className={clsx(cell, 'w-[70px]')}><Song text="701.5 FPS" /></div>
    </footer>
  )
}

const apps = [
  {
    name: '四叶草',
    w: 'w-[52px]',
    icon: (
      <g fill="#e8e8e8" stroke="#000d10" strokeWidth="1.200">
        <path d="M12 12C4 13 1 11 1 7s3-6 6-6 6 3 5 11z" />
        <path d="M12 12c-1-8 1-11 5-11s6 3 6 6-3 6-11 5z" />
        <path d="M12 12c8-1 11 1 11 5s-3 6-6 6-6-3-5-11z" />
        <path d="M12 12c1 8-1 11-5 11s-6-3-6-6 3-6 11-5z" />
        <path d="M12 12c-5 0-7-1-8-3m8 3c0-5 1-7 3-8m-3 8c5 0 7 1 8 3m-8-3c0 5-1 7-3 8" fill="none" />
      </g>
    ),
  },
  {
    name: '浏览器',
    w: 'w-[52px]',
    icon: (
      <g stroke="#e8e8e8" fill="none">
        <path d="M6 12.500h14c0-5-4-7-8-7s-7 3-7 7.500 3 7.500 7 7.500c3 0 5-1 7-4" strokeWidth="3.500" />
        <path d="M22 6c1-2 1-4-1-4C15 1 2 12 3 20c0 3 4 3 7 1" strokeWidth="1.500" />
      </g>
    ),
  },
  {
    name: '螺旋',
    w: 'w-[52px]',
    icon: (
      <g fill="none">
        <path d="M16 5C8 2 2 8 3 14c1 8 12 9 15 3 2-5-2-9-7-8-4 1-5 6-1 7 3 0 4-2 3-4M19 12c1 8-8 12-14 8M6 7c4-4 9-2 11 1" stroke="#ddd" strokeWidth="1.300" />
        <path d="M14 9c2-1 1-7 4-8h2c3 1 2 7 4 8z" fill="#e8ac10" />
        <path d="M17 10h4" stroke="#e8ac10" strokeWidth="2" />
      </g>
    ),
  },
  { name: 'Edge', w: 'w-12', icon: <path d="M2 11C3 4 8 2 13 2c6 0 9 4 9 9v3H9c0 5 6 6 11 3v4c-7 4-16 2-16-6 0-3 2-5 5-7-1 1-1 2-1 3h8c0-5-6-6-10-4-2 1-3 2-4 4z" fill="#0a78d8" /> },
  {
    name: 'Internet Explorer',
    w: 'w-[50px]',
    icon: (
      <g fill="none">
        <path d="M6 13h14c0-5-4-8-8-8s-8 3-8 8 4 8 8 8c3 0 6-1 7-4" stroke="#49a8ec" strokeWidth="3.800" />
        <path d="M22 7c2-3 1-5-1-5C14 1-1 14 1 21c1 3 5 2 8 0" stroke="#f5cf38" strokeWidth="2" />
      </g>
    ),
  },
  {
    name: '文件资源管理器',
    w: 'w-12',
    run: true,
    icon: (
      <g>
        <path d="M1 4h9l2 3h11v14H1z" fill="#f8dd82" />
        <path d="M1 4h8v3H1z" fill="#f0a820" />
        <path d="M5 13h14v9h-4v-5H9v5H5z" fill="#35b0e8" />
      </g>
    ),
  },
  {
    name: '安全浏览器',
    w: 'w-[50px]',
    run: true,
    icon: (
      <g fill="none">
        <circle cx="12" cy="13" r="10" fill="#5bb820" stroke="#c8f0a0" />
        <path d="M8 13h9c0-3-2-5-5-5s-5 2-5 5 2 5 5 5c2 0 4-1 4-2" stroke="#fff" strokeWidth="2.200" />
        <path d="M22 1C14 3 3 13 4 22" stroke="#b8e870" strokeWidth="1.500" />
      </g>
    ),
  },
  {
    name: '广联达',
    w: 'w-[50px]',
    run: true,
    icon: <path d="M24 1c-4 1-8-1-13 1C3 5 0 12 3 17c1 1 0 2-1 3 6 5 16 4 19-2 2-4 1-8-2-10-1 0-3 0-4 1 4 3 2 8-3 8-3 0-5-2-5-5 0-5 5-7 10-7 3 0 6-1 7-4z" fill="#28a0f0" />,
  },
]

function Taskbar() {
  return (
    <footer className="flex h-10 shrink-0 items-stretch bg-[#000b0e] text-white">
      <button aria-label="开始" className="flex w-12 items-center justify-center bg-black">
        <svg viewBox="0 0 16 16" className="h-4 w-4" fill="#fff">
          <path d="m0 2 7-1v6.500H0zM8 1l8-1v7.500H8zM0 8.500h7V15l-7-1zM8 8.500h8V16l-8-1z" />
        </svg>
      </button>
      <div className="flex w-[344px] items-center bg-[#333] pl-2">
        <span className="h-[22px] w-[22px] rounded-full border-[3px] border-white" />
        <input
          aria-label="搜索"
          placeholder="在这里输入你要搜索的内容"
          className="ml-[6px] min-w-0 flex-1 bg-transparent text-sm placeholder-[#9a9a9a] outline-none"
        />
        <Mic className="mr-[13px] h-4 w-4 text-[#aaa]" strokeWidth={1.5} />
      </div>
      <button aria-label="任务视图" className="flex w-12 items-center justify-center">
        <svg viewBox="0 0 20 14" className="h-[14px] w-5" fill="none" stroke="#fff">
          <path d="M4.500.5h11v13h-11zM3 2.500H.5v9H3M17 2.500h2.500v9H17" />
        </svg>
      </button>
      {apps.map((a) => (
        <button key={a.name} aria-label={a.name} className={clsx('flex flex-col items-center', a.w)}>
          <svg viewBox="0 0 24 24" className="mt-2 h-6 w-6">
            {a.icon}
          </svg>
          {a.run && <span className="mt-auto h-[2px] w-10 bg-[#76b9ed]" />}
        </button>
      ))}
      <button aria-label="广联达BIM钢筋算量软件" className="flex w-12 flex-col items-center bg-[#333d40]">
        <AppLogo className="mt-2 h-6 w-6" />
        <span className="mt-auto h-[2px] w-full bg-[#76b9ed]" />
      </button>
      <span className="flex-1" />
      <div className="flex items-center text-xs">
        <span className="mr-2">链接</span>
        <svg viewBox="0 0 12 7" className="mr-3 h-[7px] w-3" fill="none" stroke="#fff" strokeWidth="1.300">
          <path d="m.5 6 5.500-5 5.500 5" />
        </svg>
        <svg viewBox="0 0 16 12" className="mr-[11px] h-3 w-4" fill="none" stroke="#fff">
          <path d="M4.500 3.500h10v7h-10z" />
          <path d="M6 5h7v4H6z" fill="#fff" />
          <path d="M15.500 5v4M1 0v3m3-3v3M0 3h5v2l-1 1H1L0 5zM2.500 6v4H4" />
        </svg>
        <svg viewBox="0 0 14 14" className="mr-2 h-[14px] w-[14px]" fill="none" stroke="#ddd" strokeWidth="1.300">
          <path d="M1 13C1 6 6 1 13 1M4 13c0-5 4-9 9-9M7 13c0-3 3-6 6-6M10 13c0-2 1-3 3-3" />
        </svg>
        <Volume2 className="mr-2 h-4 w-4" strokeWidth={1.5} />
        <svg viewBox="0 0 23 13" className="mr-[10px] h-[13px] w-[23px]" fill="none" stroke="#fff">
          <path d="M.5.5h22v12H.5z" />
          <path d="M3 3.500h17M3 6.500h17" strokeDasharray="2 1" />
          <path d="M3 9.500h2m2 0h9m2 0h2" />
        </svg>
        <span className="mr-[13px] text-[13px] font-medium">中</span>
        <SogouLogo className="mr-4 h-[18px] w-[18px]" />
        <time className="w-[61px] text-center leading-[18px]">
          18:36
          <br />
          2018/3/10
        </time>
        <button aria-label="通知" className="relative ml-4 h-8 w-7">
          <svg viewBox="0 0 28 32" className="h-8 w-7">
            <path d="M1 8h16v13h-8l-3 4v-4H1z" fill="#fff" />
            <path d="M4 12h10M4 15h10M4 18h6" stroke="#111" />
            <circle cx="16" cy="22" r="8" fill="#303030" stroke="#999" />
            <text x="16" y="26" textAnchor="middle" fill="#fff" fontSize="12" fontFamily="Noto Sans, sans-serif">1</text>
          </svg>
        </button>
        <span className="ml-[10px] mr-1 h-10 w-px bg-[#555]" />
      </div>
    </footer>
  )
}

function SpeedBall() {
  return (
    <div className="absolute left-[748px] top-[65px] flex h-12 items-center">
      <div className="relative z-10 flex h-[47px] w-[47px] items-center justify-center overflow-hidden rounded-full border-[3px] border-[#d8dedb] bg-gradient-to-b from-[#0d7350] from-48% to-[#47ca5c] to-48% text-[13px] text-white shadow">
        55%
      </div>
      <div className="-ml-5 flex h-[37px] w-[100px] items-center rounded-r-full bg-gradient-to-b from-[#f8f8f8] to-[#d5d5d5] pl-6 text-[10px] leading-[15px] shadow-md">
        <svg viewBox="0 0 8 24" className="h-6 w-2" fill="none" strokeWidth="1.500">
          <path d="M4 8V1M1 4l3-3 3 3" stroke="#e8512e" />
          <path d="M4 15v7m-3-3 3 3 3-3" stroke="#25a84a" />
        </svg>
        <span className="w-[38px] text-right">
          0K/s
          <br />
          0K/s
        </span>
        <svg viewBox="0 0 20 20" className="ml-1 h-5 w-5">
          <circle cx="9" cy="11" r="9" fill="#3b7fd8" />
          <path d="M9 6v10M4 11h10" stroke="#fff" strokeWidth="2" />
          <circle cx="16" cy="4" r="4" fill="#e03030" />
        </svg>
      </div>
    </div>
  )
}

function ImeBar() {
  return (
    <div className="absolute right-0 top-[482px] flex h-7 w-[207px] items-center text-[#1f6fc0]">
      <SogouLogo className="z-10 h-7 w-7 shrink-0" />
      <div className="-ml-2 flex h-[23px] flex-1 items-center justify-between border border-[#b8c4d0] bg-white pl-3 pr-1">
        <span className="text-[15px] font-bold">中</span>
        <svg viewBox="0 0 12 12" className="h-3 w-3" fill="none" stroke="currentColor" strokeWidth="1.300">
          <circle cx="2.500" cy="3" r="1.700" />
          <path d="M9 7c2 0 1 3-1 4" strokeWidth="2.500" />
        </svg>
        <Smile className="h-4 w-4" strokeWidth={2.2} />
        <Mic className="h-4 w-4" fill="currentColor" />
        <Keyboard className="h-[18px] w-[18px]" />
        <svg viewBox="0 0 17 16" className="h-4 w-[17px]" fill="#b3bfd4">
          <circle cx="6" cy="4" r="3.500" />
          <path d="M0 14c0-7 8-7 9-5v5z" />
          <path d="M7 8.500h9v6H7z" fill="#fff" stroke="#b3bfd4" />
          <path d="M8.500 10.500h2v1h-1v1.500h2m1-2.500h2v1h-1v1.500h2" fill="none" stroke="#b3bfd4" />
        </svg>
        <Shirt className="h-[15px] w-[15px]" fill="currentColor" />
        <Wrench className="h-[15px] w-[15px]" fill="currentColor" />
      </div>
    </div>
  )
}

export default function App() {
  return (
    <div className={clsx('relative flex h-screen flex-col overflow-hidden bg-[#f0f0f0] text-xs leading-4 text-black', UI)}>
      <TitleBar />
      <MenuBar />
      <MainToolbar />
      <main className="flex min-h-0 flex-1 gap-[6px]">
        <ModulePanel />
        <div className="flex min-w-0 flex-1 flex-col">
          <MemberToolbar />
          <div className="flex min-h-0 flex-1">
            <MemberPanel />
            <PropertyPanel />
          </div>
        </div>
      </main>
      <StatusBar />
      <Taskbar />
      <SpeedBall />
      <ImeBar />
    </div>
  )
}
